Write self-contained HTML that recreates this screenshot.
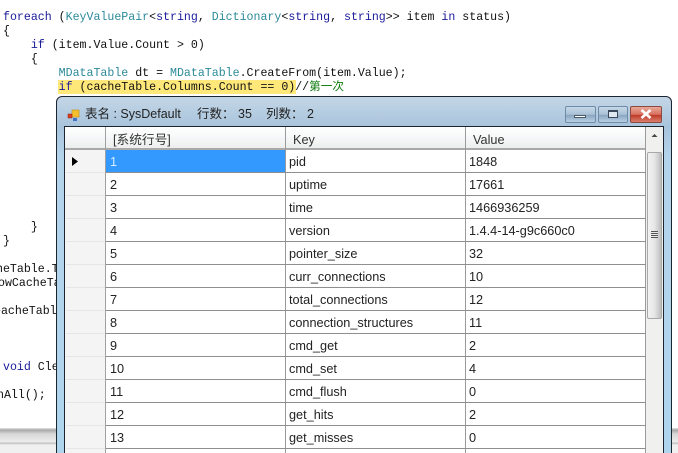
<!DOCTYPE html>
<html><head><meta charset="utf-8">
<style>
html,body{margin:0;padding:0;background:#fff}
#p{position:relative;width:678px;height:453px;overflow:hidden;background:#fff;font-family:"Liberation Sans","Noto Sans CJK SC",sans-serif}
.c{position:absolute;white-space:pre;font:11.6px/14px "Liberation Mono","Noto Sans CJK SC",monospace;color:#111;left:3px}
.c b{font-weight:normal}
.k{color:#1a1a9a}.t{color:#2b8a9a}.g{color:#0a7a0a}
.a{position:absolute}
.r{position:absolute;font-size:12.7px;line-height:16px;color:#222;white-space:pre}
.h{position:absolute;left:106px;width:540px;height:1px;background:#8f8f8f}
.rh{position:absolute;left:66px;width:39px;height:1px;background:#e6e6e6}
.tt{position:absolute;top:106px;font-size:12.5px;line-height:17px;color:#222;white-space:pre}
</style></head><body><div id="p">
<div class="c" style="top:11px"><b class="k">foreach</b> (<b class="t">KeyValuePair</b>&lt;<b class="k">string</b>, <b class="t">Dictionary</b>&lt;<b class="k">string</b>, <b class="k">string</b>&gt;&gt; item <b class="k">in</b> status)</div>
<div class="c" style="top:25px">{</div>
<div class="c" style="top:39px">    <b class="k">if</b> (item.Value.Count &gt; 0)</div>
<div class="c" style="top:53px">    {</div>
<div class="c" style="top:67px">        <b class="t">MDataTable</b> dt = <b class="t">MDataTable</b>.CreateFrom(item.Value);</div>
<div class="a" style="left:58px;top:80px;width:238px;height:14px;background:#ffe87a"></div>
<div class="c" style="top:81px">        <b class="k">if</b> (cacheTable.Columns.Count == 0)//<b class="g">第一次</b></div>
<div class="c" style="top:221px">    }</div>
<div class="c" style="top:235px">}</div>
<div class="c" style="top:263px;left:-4px">heTable.T</div>
<div class="c" style="top:277px;left:-2px">owCacheTa</div>
<div class="c" style="top:305px;left:-6px">eacheTabl</div>
<div class="c" style="top:361px;left:3px"><b class="k">void</b> Cle</div>
<div class="c" style="top:389px;left:-3px">nAll();</div>

<div class="a" style="left:0;top:428px;width:678px;height:25px;background:linear-gradient(#e8e8e8,#a8a8a8 2px,#d8d8d8 6px,#ededed 14px,#bdbdbd 15px,#f0f0f0 17px)"></div>

<!-- window -->
<div class="a" style="left:56px;top:96px;width:616px;height:370px;box-sizing:border-box;border:1px solid #1b2530;border-radius:6px 6px 0 0;background:linear-gradient(#c4d6e6,#a8c4dc 30px,#b4d4ec 60px,#aed4ee)"></div>
<svg class="a" style="left:67px;top:109px" width="13" height="13" viewBox="0 0 13 13"><rect x="5" y="1" width="7" height="7" fill="#f4c030" stroke="#c08a10" stroke-width=".6"/><rect x="1" y="5" width="4" height="4" fill="#d84020" stroke="#902010" stroke-width=".5"/><rect x="6" y="9" width="4" height="3" fill="#4070c8"/></svg>
<div class="tt" style="left:85px">表名 : SysDefault</div>
<div class="tt" style="left:197px">行数：</div>
<div class="tt" style="left:238px">35</div>
<div class="tt" style="left:266px">列数：</div>
<div class="tt" style="left:307px">2</div>

<!-- buttons -->
<div class="a" style="left:565px;top:106px;width:31px;height:17px;box-sizing:border-box;border:1px solid #6f8ba6;border-radius:2px;background:linear-gradient(#c6d8e8,#a8c0d6 50%,#8aa6c0 55%,#b8d0e4)"></div>
<div class="a" style="left:574px;top:115px;width:12px;height:3px;box-sizing:border-box;background:#fff;border:1px solid #4a5a6a"></div>
<div class="a" style="left:598px;top:106px;width:30px;height:17px;box-sizing:border-box;border:1px solid #6f8ba6;border-radius:2px;background:linear-gradient(#c6d8e8,#a8c0d6 50%,#8aa6c0 55%,#b8d0e4)"></div>
<div class="a" style="left:608px;top:110px;width:10px;height:8px;box-sizing:border-box;background:#dfe8f0;border:2px solid #39485a;border-width:2px 1px 1px"></div>
<div class="a" style="left:630px;top:106px;width:32px;height:17px;box-sizing:border-box;border:1px solid #8a4a40;border-radius:2px;background:linear-gradient(#e8a898,#d87060 50%,#c03a28 55%,#d88070)"></div>
<svg class="a" style="left:639px;top:108px" width="14" height="12" viewBox="0 0 14 12"><path d="M2.5 2L11.5 10M11.5 2L2.5 10" stroke="#fff" stroke-width="2.6"/></svg>

<!-- client -->
<div class="a" style="left:64px;top:126px;width:600px;height:330px;box-sizing:border-box;border:1px solid #1b2530;background:#fff"></div>
<div class="a" style="left:65px;top:127px;width:581px;height:22px;background:linear-gradient(#fff,#f6f7f8 50%,#eceded)"></div>
<div class="a" style="left:65px;top:148px;width:581px;height:2px;background:#a9a9a9"></div>
<div class="a" style="left:65px;top:150px;width:40px;height:303px;background:#f4f4f4"></div>
<div class="a" style="left:105px;top:127px;width:1px;height:326px;background:#a0a0a0"></div>
<div class="a" style="left:285px;top:127px;width:1px;height:326px;background:#9a9a9a"></div>
<div class="a" style="left:465px;top:127px;width:1px;height:326px;background:#9a9a9a"></div>
<div class="a" style="left:645px;top:127px;width:1px;height:326px;background:#9a9a9a"></div>
<div class="a" style="left:106px;top:150px;width:179px;height:22px;background:#3399ff"></div>
<svg class="a" style="left:71px;top:156px" width="8" height="11"><path d="M1 1L7 5.5L1 10Z" fill="#000"/></svg>

<div class="h" style="top:172px"></div><div class="h" style="top:195px"></div><div class="h" style="top:218px"></div><div class="h" style="top:241px"></div><div class="h" style="top:264px"></div><div class="h" style="top:287px"></div><div class="h" style="top:310px"></div><div class="h" style="top:333px"></div><div class="h" style="top:356px"></div><div class="h" style="top:379px"></div><div class="h" style="top:402px"></div><div class="h" style="top:425px"></div><div class="h" style="top:448px"></div>
<div class="rh" style="top:172px"></div><div class="rh" style="top:195px"></div><div class="rh" style="top:218px"></div><div class="rh" style="top:241px"></div><div class="rh" style="top:264px"></div><div class="rh" style="top:287px"></div><div class="rh" style="top:310px"></div><div class="rh" style="top:333px"></div><div class="rh" style="top:356px"></div><div class="rh" style="top:379px"></div><div class="rh" style="top:402px"></div><div class="rh" style="top:425px"></div><div class="rh" style="top:448px"></div>

<div class="r" style="left:113px;top:132px;color:#333">[系统行号]</div>
<div class="r" style="left:293px;top:132px;color:#333">Key</div>
<div class="r" style="left:473px;top:132px;color:#333">Value</div>

<div class="r" style="left:110px;top:154px;color:#d8f0ff">1</div><div class="r" style="left:289px;top:154px">pid</div><div class="r" style="left:469px;top:154px">1848</div>
<div class="r" style="left:110px;top:177px">2</div><div class="r" style="left:289px;top:177px">uptime</div><div class="r" style="left:469px;top:177px">17661</div>
<div class="r" style="left:110px;top:200px">3</div><div class="r" style="left:289px;top:200px">time</div><div class="r" style="left:469px;top:200px">1466936259</div>
<div class="r" style="left:110px;top:223px">4</div><div class="r" style="left:289px;top:223px">version</div><div class="r" style="left:469px;top:223px">1.4.4-14-g9c660c0</div>
<div class="r" style="left:110px;top:246px">5</div><div class="r" style="left:289px;top:246px">pointer_size</div><div class="r" style="left:469px;top:246px">32</div>
<div class="r" style="left:110px;top:269px">6</div><div class="r" style="left:289px;top:269px">curr_connections</div><div class="r" style="left:469px;top:269px">10</div>
<div class="r" style="left:110px;top:292px">7</div><div class="r" style="left:289px;top:292px">total_connections</div><div class="r" style="left:469px;top:292px">12</div>
<div class="r" style="left:110px;top:315px">8</div><div class="r" style="left:289px;top:315px">connection_structures</div><div class="r" style="left:469px;top:315px">11</div>
<div class="r" style="left:110px;top:338px">9</div><div class="r" style="left:289px;top:338px">cmd_get</div><div class="r" style="left:469px;top:338px">2</div>
<div class="r" style="left:110px;top:361px">10</div><div class="r" style="left:289px;top:361px">cmd_set</div><div class="r" style="left:469px;top:361px">4</div>
<div class="r" style="left:110px;top:384px">11</div><div class="r" style="left:289px;top:384px">cmd_flush</div><div class="r" style="left:469px;top:384px">0</div>
<div class="r" style="left:110px;top:407px">12</div><div class="r" style="left:289px;top:407px">get_hits</div><div class="r" style="left:469px;top:407px">2</div>
<div class="r" style="left:110px;top:430px">13</div><div class="r" style="left:289px;top:430px">get_misses</div><div class="r" style="left:469px;top:430px">0</div>

<!-- scrollbar -->
<div class="a" style="left:646px;top:127px;width:17px;height:326px;background:#f0f0ee"></div>
<svg class="a" style="left:651px;top:133px" width="7" height="5"><path d="M0.5 4L3.5 1L6.5 4Z" fill="#444"/></svg>
<div class="a" style="left:647px;top:152px;width:15px;height:167px;box-sizing:border-box;border:1px solid #a8a8a8;border-radius:2px;background:linear-gradient(90deg,#f2f2f2,#e6e6e6 50%,#bdbdbd)"></div>
<div class="a" style="left:651px;top:231px;width:7px;height:7px;background:repeating-linear-gradient(#555 0,#555 1px,#e8e8e8 1px,#e8e8e8 2px)"></div>
</div></body></html>
